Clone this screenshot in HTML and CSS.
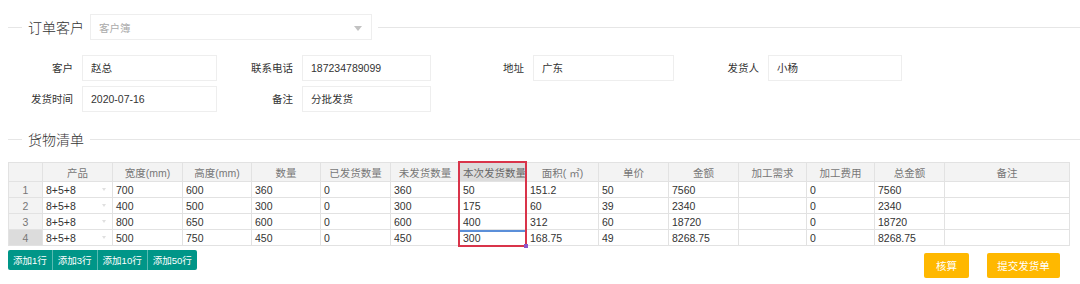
FILE: index.html
```html
<!DOCTYPE html>
<html lang="zh-CN">
<head>
  <meta charset="UTF-8" />
  <title>发货单</title>
  <link rel="stylesheet" href="styles.css">
</head>
<body>
  <div class="page">
    <!-- 订单客户 -->
    <div class="sec-title">
      <span class="sec-text">订单客户</span>
      <div class="select">
        <span class="placeholder">客户簿</span>
        <i class="caret"></i>
      </div>
    </div>

    <div class="form-grid">
      <label>客户</label>
      <div class="input">赵总</div>
      <label>联系电话</label>
      <div class="input">187234789099</div>
      <label>地址</label>
      <div class="input">广东</div>
      <label>发货人</label>
      <div class="input">小杨</div>

      <label>发货时间</label>
      <div class="input">2020-07-16</div>
      <label>备注</label>
      <div class="input">分批发货</div>
    </div>

    <!-- 货物清单 -->
    <div class="sec-title goods">
      <span class="sec-text">货物清单</span>
    </div>

    <div class="grid-wrap">
      <table class="grid">
        <colgroup>
          <col style="width:34px"><col style="width:70px"><col style="width:70px"><col style="width:69px">
          <col style="width:69px"><col style="width:70px"><col style="width:69px"><col style="width:67px">
          <col style="width:72px"><col style="width:70px"><col style="width:70px"><col style="width:68px">
          <col style="width:68px"><col style="width:70px"><col style="width:125px">
        </colgroup>
        <thead>
          <tr>
            <th></th><th>产品</th><th>宽度(mm)</th><th>高度(mm)</th><th>数量</th><th>已发货数量</th>
            <th>未发货数量</th><th class="active">本次发货数量</th><th>面积( ㎡)</th><th>单价</th><th>金额</th>
            <th>加工需求</th><th>加工费用</th><th>总金额</th><th>备注</th>
          </tr>
        </thead>
        <tbody>
          <tr>
            <td class="num">1</td><td class="prod">8+5+8<i class="mini"></i></td><td>700</td><td>600</td><td>360</td><td>0</td>
            <td>360</td><td>50</td><td>151.2</td><td>50</td><td>7560</td><td></td><td>0</td><td>7560</td><td></td>
          </tr>
          <tr>
            <td class="num">2</td><td class="prod">8+5+8<i class="mini"></i></td><td>400</td><td>500</td><td>300</td><td>0</td>
            <td>300</td><td>175</td><td>60</td><td>39</td><td>2340</td><td></td><td>0</td><td>2340</td><td></td>
          </tr>
          <tr>
            <td class="num">3</td><td class="prod">8+5+8<i class="mini"></i></td><td>800</td><td>650</td><td>600</td><td>0</td>
            <td>600</td><td>400</td><td>312</td><td>60</td><td>18720</td><td></td><td>0</td><td>18720</td><td></td>
          </tr>
          <tr>
            <td class="num sel">4</td><td class="prod">8+5+8<i class="mini"></i></td><td>500</td><td>750</td><td>450</td><td>0</td>
            <td>450</td><td class="cur">300</td><td>168.75</td><td>49</td><td>8268.75</td><td></td><td>0</td><td>8268.75</td><td></td>
          </tr>
        </tbody>
      </table>
      <!-- highlight around the column -->
      <div class="col-mark"></div>
    </div>

    <div class="actions">
      <div class="btn-group">
        <button class="btn-add">添加1行</button>
        <button class="btn-add">添加3行</button>
        <button class="btn-add">添加10行</button>
        <button class="btn-add">添加50行</button>
      </div>
      <div class="btn-right">
        <button class="btn-warm">核算</button>
        <button class="btn-warm wide">提交发货单</button>
      </div>
    </div>
  </div>
</body>
</html>
```

FILE: styles.css
```css
* { box-sizing: border-box; }
body {
  margin: 0;
  background: #fff;
  color: #333;
  font-family: "Liberation Sans", "Noto Sans CJK SC", sans-serif;
  font-size: 10.5px;
}
.page { padding: 14px 0 0 8px; }

/* section titles with a rule */
.sec-title {
  display: flex;
  align-items: center;
  gap: 6px;
  height: 26px;
}
.sec-title::before {
  content: "";
  width: 14px;
  border-top: 1px solid #e6e6e6;
}
.sec-title::after {
  content: "";
  flex: 1;
  border-top: 1px solid #e6e6e6;
}
.sec-text {
  font-size: 14px;
  font-weight: 300;
  color: #333;
}
.sec-title.goods { margin-top: 14px; }

.select {
  position: relative;
  width: 282px;
  height: 26px;
  border: 1px solid #eee;
  display: flex;
  align-items: center;
  padding-left: 8px;
}
.placeholder { color: #aaa; font-size: 10.5px; }
.caret {
  position: absolute;
  right: 9px;
  top: 11px;
  border-left: 4px solid transparent;
  border-right: 4px solid transparent;
  border-top: 5px solid #c2c2c2;
}

/* basic info */
.form-grid {
  display: grid;
  grid-template-columns: 74px 135px 85px 129px 102px 141px 94px 134px;
  grid-auto-rows: 26px;
  row-gap: 5px;
  margin-top: 15px;
}
.form-grid label {
  text-align: right;
  padding-right: 9px;
  line-height: 26px;
  color: #333;
}
.form-grid .input {
  border: 1px solid #eee;
  line-height: 24px;
  padding-left: 8px;
  color: #333;
}

/* goods table */
.grid-wrap {
  position: relative;
  width: 1061px;
  margin-top: 10px;
}
.grid {
  table-layout: fixed;
  border-collapse: collapse;
  width: 1061px;
}
.grid th, .grid td {
  border: 1px solid #e2e2e2;
  padding: 0 3px;
  text-align: left;
  white-space: nowrap;
  overflow: hidden;
  font-weight: normal;
}
.grid th {
  height: 19px;
  background: #f3f3f3;
  color: #777;
  text-align: center;
}
.grid th.active { background: #dcdcdc; color: #666; }
.grid td { height: 16px; line-height: 14px; color: #333; }
.grid td.num {
  background: #f3f3f3;
  color: #777;
  text-align: center;
}
.grid td.num.sel { background: #dcdcdc; }
.grid td.prod { position: relative; }
.mini {
  position: absolute;
  right: 6px;
  top: 6px;
  border-left: 2px solid transparent;
  border-right: 2px solid transparent;
  border-top: 3px solid #e0e0e0;
}
.grid td.cur { box-shadow: inset 0 2px 0 #5b8fd9; }

.col-mark {
  position: absolute;
  left: 450px;
  top: -1px;
  width: 69px;
  height: 86px;
  border: 2px solid #d9344a;
  pointer-events: none;
}
.col-mark::after {
  content: "";
  position: absolute;
  right: -3px;
  bottom: -3px;
  width: 4px;
  height: 4px;
  background: #8c55c8;
}

/* buttons */
.actions {
  display: flex;
  justify-content: space-between;
  align-items: flex-start;
  margin-top: 4px;
}
.btn-group { display: flex; }
.btn-add {
  height: 20px;
  padding: 0 5px;
  border: none;
  border-left: 1px solid rgba(255,255,255,0.35);
  background: #009688;
  color: #fff;
  font-family: inherit;
  font-size: 9.5px;
  cursor: pointer;
}
.btn-add:first-child { border-left: none; border-radius: 2px 0 0 2px; }
.btn-add:last-child { border-radius: 0 2px 2px 0; }
.btn-right {
  display: flex;
  gap: 18px;
  margin-top: 3px;
  margin-right: 20px;
}
.btn-warm {
  height: 25px;
  width: 45px;
  border: none;
  border-radius: 2px;
  background: #ffb800;
  color: #fff;
  font-family: inherit;
  font-size: 10.5px;
  cursor: pointer;
}
.btn-warm.wide { width: 73px; }
```
